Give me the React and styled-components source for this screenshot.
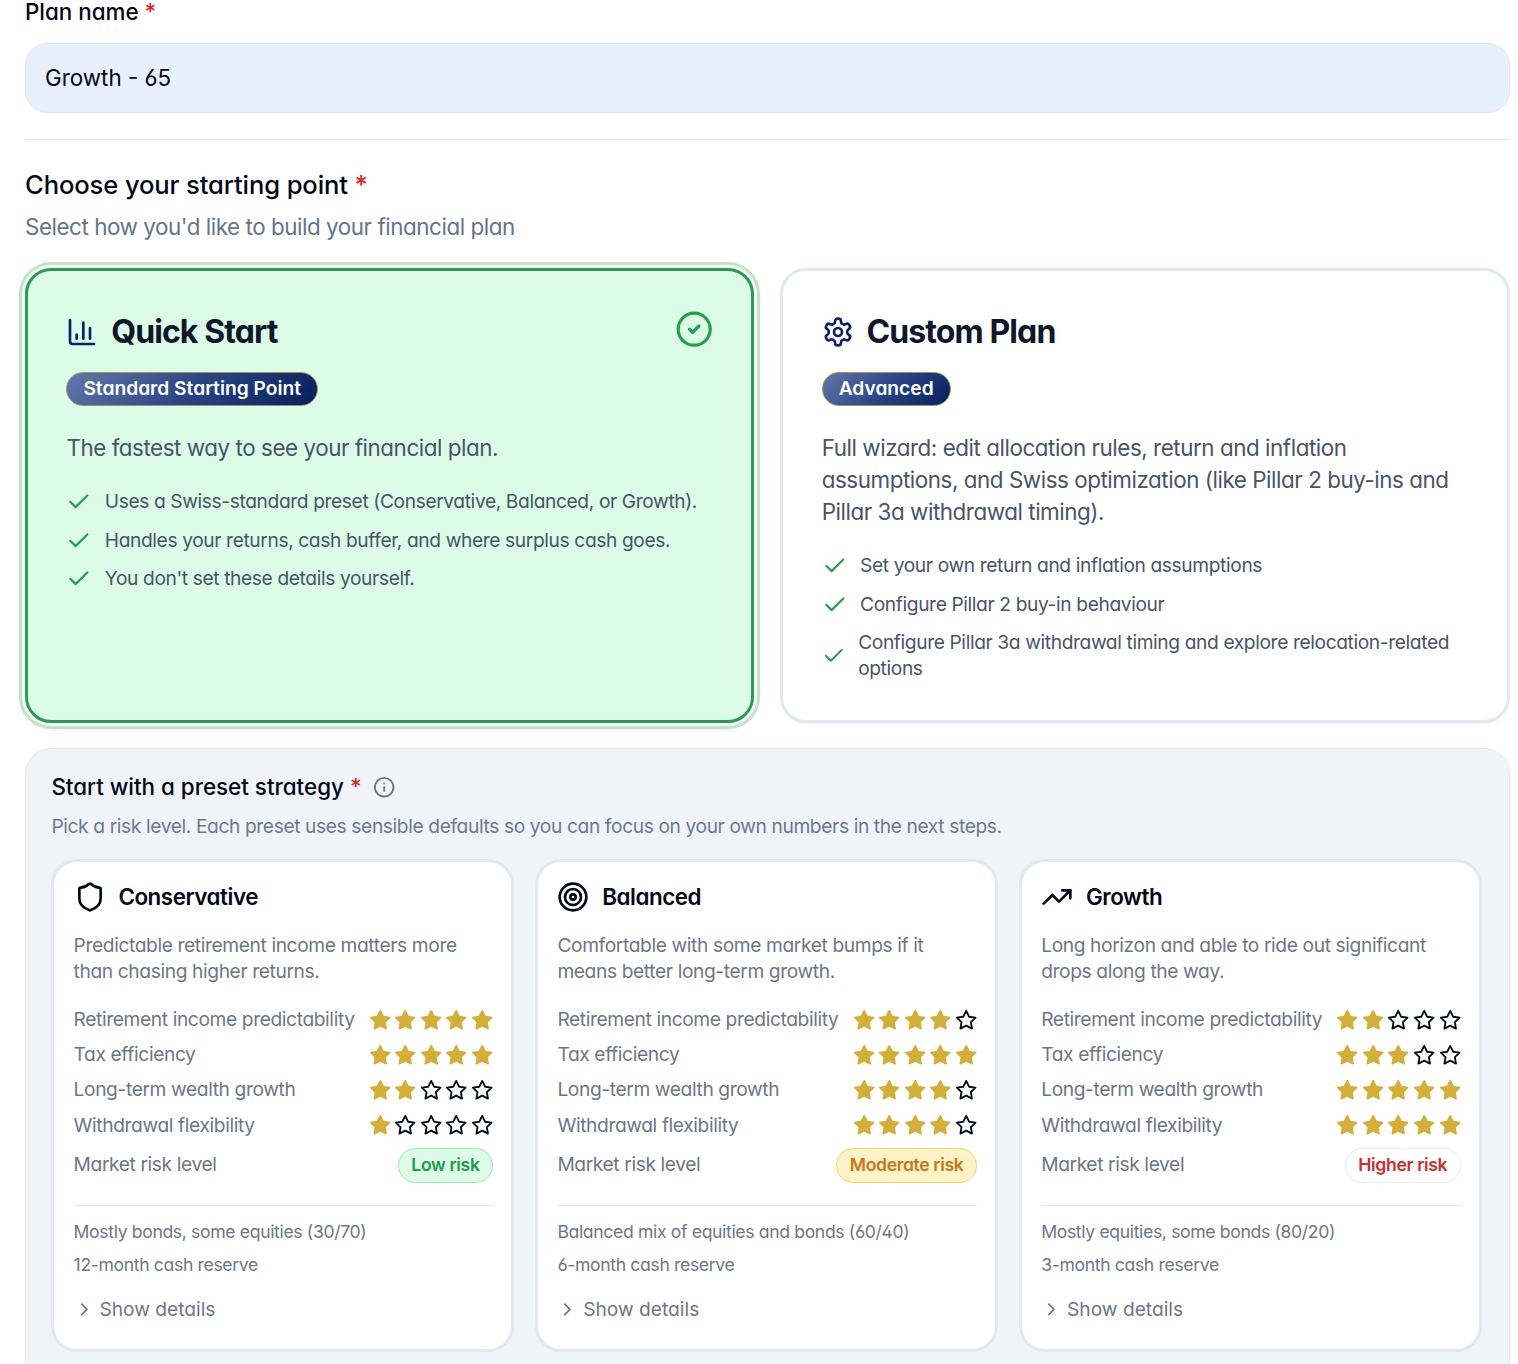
import React from 'react';
import styled, { createGlobalStyle } from 'styled-components';
import {
  ChartColumn,
  Check,
  ChevronRight,
  CircleCheck,
  Info,
  Shield,
  Target,
  TrendingUp,
} from 'lucide-react';

const GlobalStyle = createGlobalStyle`
  * {
    box-sizing: border-box;
  }

  body {
    margin: 0;
    height: 1364px;
    overflow: hidden;
    background: #fff;
    color: #020817;
    font-family: Inter, "Liberation Sans", sans-serif;
    font-feature-settings: "cv02", "cv03", "cv04", "cv11";
    -webkit-font-smoothing: antialiased;
  }

  h2, h3, h4, p, ul {
    margin: 0;
    padding: 0;
  }
`;

const Page = styled.main`
  height: 1364px;
  padding: 0 8.4px 0 25px;
  overflow: hidden;
`;

const Field = styled.div`
  display: flex;
  flex-direction: column;
  gap: 19px;
  padding-bottom: 26px;
  border-bottom: 1px solid #e2e8f0;
`;

const FieldLabel = styled.label`
  height: 24px;
  font-size: 22.4px;
  font-weight: 500;
  line-height: 24px;
`;

const Required = styled.span`
  color: #dc2626;
`;

const TextInput = styled.input`
  width: 100%;
  height: 70px;
  padding: 0 19px 2px;
  border: 1px solid #e2e8f0;
  border-radius: 22px;
  background: #e8f0fe;
  color: #020817;
  font: inherit;
  font-feature-settings: inherit;
  font-size: 22.4px;
  outline: none;
`;

const SectionTitle = styled.h2`
  margin-top: 26px;
  font-size: 25.6px;
  font-weight: 500;
  line-height: 38px;
  letter-spacing: -0.12px;
`;

const SectionHint = styled.p`
  margin-top: 7px;
  color: #64748b;
  font-size: 22.4px;
  line-height: 32px;
  letter-spacing: -0.02em;
`;

const ModeGrid = styled.div`
  display: grid;
  grid-template-columns: 1fr 1fr;
  gap: 26px;
  margin-top: 25px;
`;

const ModeCard = styled.section`
  min-height: 455px;
  padding: 38px 38.4px;
  border: 3px solid ${({ $selected }) => ($selected ? '#2c9a55' : '#e2e8f0')};
  border-radius: 26px;
  background: ${({ $selected }) => ($selected ? '#dcfce7' : '#fff')};
  box-shadow: ${({ $selected }) =>
    $selected
      ? '0 0 0 3px #f2fdf5, 0 0 0 6px #c5e0cd, 0 2px 7px 3px rgba(22, 101, 52, 0.12)'
      : '0 1px 3px rgba(15, 23, 42, 0.05)'};
`;

const ModeHeader = styled.div`
  display: flex;
  align-items: flex-start;
  justify-content: space-between;
`;

const ModeTitle = styled.h3`
  display: flex;
  align-items: center;
  gap: 12.8px;
  padding-top: 3px;
  color: #0f172a;
  font-size: 32px;
  font-weight: 700;
  line-height: 40px;
  letter-spacing: -0.9px;

  svg {
    color: #0b2265;
  }
`;

const SelectedIcon = styled(CircleCheck)`
  margin-top: 1px;
  color: #22a04b;
`;

const Badge = styled.span`
  display: inline-flex;
  align-items: center;
  height: 34px;
  margin-top: 20px;
  padding: 0 16px 3px;
  border: 1px solid #a8924f;
  border-radius: 17px;
  background: linear-gradient(135deg, #6478ab 0%, #2a4587 50%, #051f5c 100%);
  background-origin: border-box;
  color: #fff;
  font-size: 19.2px;
  font-weight: 600;
  line-height: 26px;
`;

const ModeText = styled.p`
  margin-top: 26px;
  color: #475569;
  font-size: 22.4px;
  line-height: 32px;
  letter-spacing: -0.02em;
`;

const FeatureList = styled.ul`
  display: flex;
  flex-direction: column;
  gap: 12.8px;
  margin-top: 25.2px;
  list-style: none;
`;

const Feature = styled.li`
  display: flex;
  align-items: center;
  gap: 12.8px;
  color: #475569;
  font-size: 19.2px;
  line-height: 25.6px;
  letter-spacing: -0.02em;

  svg {
    color: #22a04b;
  }
`;

const PresetPanel = styled.section`
  height: 640px;
  margin-top: 25px;
  padding: 22px 26.6px 0 25.4px;
  border: 1px solid #e2e8f0;
  border-radius: 26px;
  background: #f0f4f9;
`;

const PanelTitle = styled.h3`
  display: flex;
  align-items: center;
  gap: 11px;
  font-size: 22.4px;
  font-weight: 500;
  line-height: 32px;

  svg {
    color: #6b7280;
  }
`;

const PanelHint = styled.p`
  margin-top: 10px;
  color: #6b7a90;
  font-size: 19.2px;
  line-height: 26px;
  letter-spacing: -0.02em;
`;

const PresetGrid = styled.div`
  display: grid;
  grid-template-columns: repeat(3, 1fr);
  gap: 20.8px;
  margin-top: 20.4px;
`;

const PresetCard = styled.article`
  height: 492.4px;
  padding: 18.6px 18px 0 19.2px;
  border: 3px solid #e2e8f0;
  border-radius: 26px;
  background: #fff;
`;

const PresetTitle = styled.h4`
  display: flex;
  align-items: center;
  gap: 12.8px;
  font-size: 22.4px;
  font-weight: 600;
  line-height: 32px;
  letter-spacing: -0.02em;
`;

const PresetText = styled.p`
  height: 52px;
  margin-top: 19px;
  color: #6b7787;
  font-size: 19.2px;
  line-height: 26px;
  letter-spacing: -0.02em;
`;

const Ratings = styled.div`
  display: flex;
  flex-direction: column;
  gap: 9.6px;
  margin-top: 23px;
  padding-bottom: 22px;
  border-bottom: 1px solid #e2e8f0;
`;

const RatingRow = styled.div`
  display: flex;
  align-items: center;
  justify-content: space-between;
  color: #6b7787;
  font-size: 19.2px;
  line-height: 25.6px;
  letter-spacing: -0.02em;
`;

const RiskLabel = styled.span`
  padding-bottom: 1.6px;
`;

const Stars = styled.span`
  display: flex;
  gap: 3.2px;
`;

const StarShape = styled.svg`
  width: 22.4px;
  height: 22.4px;
  color: ${({ $on }) => ($on ? '#d4af37' : '#020817')};
  fill: ${({ $on }) => ($on ? 'currentColor' : 'none')};
  stroke: currentColor;
  stroke-width: 2;
  stroke-linejoin: round;
`;

const riskColors = {
  low: { text: '#219a4c', fill: '#dcfce7', line: '#a0e5b8' },
  moderate: { text: '#c9761a', fill: '#fef3c7', line: '#f0d569' },
  high: { text: '#cf2c30', fill: '#fff', line: '#e8ebf1' },
};

const RiskPill = styled.span`
  height: 35.2px;
  padding: 0 12.8px;
  border: 1px solid ${({ $level }) => riskColors[$level].line};
  border-radius: 18px;
  background: ${({ $level }) => riskColors[$level].fill};
  color: ${({ $level }) => riskColors[$level].text};
  font-size: 17.6px;
  font-weight: 600;
  line-height: 32px;
  letter-spacing: -0.02em;
`;

const Facts = styled.div`
  display: flex;
  flex-direction: column;
  gap: 7px;
  margin-top: 13px;
  color: #6b7787;
  font-size: 17.6px;
  line-height: 26px;
  letter-spacing: -0.02em;
`;

const DetailsToggle = styled.button`
  display: flex;
  align-items: center;
  gap: 5px;
  margin-top: 18px;
  padding: 0;
  border: 0;
  background: none;
  color: #6b7787;
  font: inherit;
  font-feature-settings: inherit;
  font-size: 19.2px;
  line-height: 26px;
`;

// Six-tooth cog with waisted teeth
const Cog = ({ size }) => (
  <svg
    width={size}
    height={size}
    viewBox="0 0 24 24"
    fill="none"
    stroke="currentColor"
    strokeWidth="2"
    strokeLinecap="round"
    strokeLinejoin="round"
  >
    <path d="M12.22 2h-.44a2 2 0 0 0-2 2v.18a2 2 0 0 1-1 1.73l-.43.25a2 2 0 0 1-2 0l-.15-.08a2 2 0 0 0-2.73.73l-.22.38a2 2 0 0 0 .73 2.73l.15.1a2 2 0 0 1 1 1.72v.51a2 2 0 0 1-1 1.74l-.15.09a2 2 0 0 0-.73 2.73l.22.38a2 2 0 0 0 2.73.73l.15-.08a2 2 0 0 1 2 0l.43.25a2 2 0 0 1 1 1.73V20a2 2 0 0 0 2 2h.44a2 2 0 0 0 2-2v-.18a2 2 0 0 1 1-1.73l.43-.25a2 2 0 0 1 2 0l.15.08a2 2 0 0 0 2.73-.73l.22-.39a2 2 0 0 0-.73-2.73l-.15-.08a2 2 0 0 1-1-1.74v-.5a2 2 0 0 1 1-1.74l.15-.09a2 2 0 0 0 .73-2.73l-.22-.38a2 2 0 0 0-2.73-.73l-.15.08a2 2 0 0 1-2 0l-.43-.25a2 2 0 0 1-1-1.73V4a2 2 0 0 0-2-2z" />
    <circle cx="12" cy="12" r="3" />
  </svg>
);

const RatingStar = ({ on }) => (
  <StarShape viewBox="0 0 24 24" $on={on}>
    <polygon points="12 2 15.09 8.26 22 9.27 17 14.14 18.18 21.02 12 17.77 5.82 21.02 7 14.14 2 9.27 8.91 8.26 12 2" />
  </StarShape>
);

const modes = [
  {
    title: 'Quick Start',
    icon: ChartColumn,
    badge: 'Standard Starting Point',
    text: 'The fastest way to see your financial plan.',
    features: [
      'Uses a Swiss-standard preset (Conservative, Balanced, or Growth).',
      'Handles your returns, cash buffer, and where surplus cash goes.',
      "You don't set these details yourself.",
    ],
    selected: true,
  },
  {
    title: 'Custom Plan',
    icon: Cog,
    badge: 'Advanced',
    text: 'Full wizard: edit allocation rules, return and inflation assumptions, and Swiss optimization (like Pillar 2 buy-ins and Pillar 3a withdrawal timing).',
    features: [
      'Set your own return and inflation assumptions',
      'Configure Pillar 2 buy-in behaviour',
      'Configure Pillar 3a withdrawal timing and explore relocation-related options',
    ],
    selected: false,
  },
];

const criteria = [
  'Retirement income predictability',
  'Tax efficiency',
  'Long-term wealth growth',
  'Withdrawal flexibility',
];

const presets = [
  {
    title: 'Conservative',
    icon: Shield,
    text: 'Predictable retirement income matters more than chasing higher returns.',
    scores: [5, 5, 2, 1],
    level: 'low',
    risk: 'Low risk',
    facts: ['Mostly bonds, some equities (30/70)', '12-month cash reserve'],
  },
  {
    title: 'Balanced',
    icon: Target,
    text: 'Comfortable with some market bumps if it means better long-term growth.',
    scores: [4, 5, 4, 4],
    level: 'moderate',
    risk: 'Moderate risk',
    facts: ['Balanced mix of equities and bonds (60/40)', '6-month cash reserve'],
  },
  {
    title: 'Growth',
    icon: TrendingUp,
    text: 'Long horizon and able to ride out significant drops along the way.',
    scores: [2, 3, 5, 5],
    level: 'high',
    risk: 'Higher risk',
    facts: ['Mostly equities, some bonds (80/20)', '3-month cash reserve'],
  },
];

const Mode = ({ mode }) => {
  const Icon = mode.icon;
  return (
    <ModeCard $selected={mode.selected}>
      <ModeHeader>
        <ModeTitle>
          <Icon size={32} />
          {mode.title}
        </ModeTitle>
        {mode.selected && <SelectedIcon size={38.4} />}
      </ModeHeader>
      <Badge>{mode.badge}</Badge>
      <ModeText>{mode.text}</ModeText>
      <FeatureList>
        {mode.features.map((feature) => (
          <Feature key={feature}>
            <Check size={25.6} />
            <span>{feature}</span>
          </Feature>
        ))}
      </FeatureList>
    </ModeCard>
  );
};

const Preset = ({ preset }) => {
  const Icon = preset.icon;
  return (
    <PresetCard>
      <PresetTitle>
        <Icon size={32} />
        {preset.title}
      </PresetTitle>
      <PresetText>{preset.text}</PresetText>
      <Ratings>
        {criteria.map((name, row) => (
          <RatingRow key={name}>
            {name}
            <Stars>
              {[1, 2, 3, 4, 5].map((n) => (
                <RatingStar key={n} on={n <= preset.scores[row]} />
              ))}
            </Stars>
          </RatingRow>
        ))}
        <RatingRow>
          <RiskLabel>Market risk level</RiskLabel>
          <RiskPill $level={preset.level}>{preset.risk}</RiskPill>
        </RatingRow>
      </Ratings>
      <Facts>
        {preset.facts.map((fact) => (
          <p key={fact}>{fact}</p>
        ))}
      </Facts>
      <DetailsToggle type="button">
        <ChevronRight size={20.8} />
        Show details
      </DetailsToggle>
    </PresetCard>
  );
};

const App = () => (
  <>
    <GlobalStyle />
    <Page>
      <Field>
        <FieldLabel htmlFor="plan-name">
          Plan name <Required>*</Required>
        </FieldLabel>
        <TextInput id="plan-name" defaultValue="Growth - 65" />
      </Field>
      <SectionTitle>
        Choose your starting point <Required>*</Required>
      </SectionTitle>
      <SectionHint>Select how you'd like to build your financial plan</SectionHint>
      <ModeGrid>
        {modes.map((mode) => (
          <Mode key={mode.title} mode={mode} />
        ))}
      </ModeGrid>
      <PresetPanel>
        <PanelTitle>
          <span>
            Start with a preset strategy <Required>*</Required>
          </span>
          <Info size={22.4} />
        </PanelTitle>
        <PanelHint>
          Pick a risk level. Each preset uses sensible defaults so you can focus on your own numbers in the next steps.
        </PanelHint>
        <PresetGrid>
          {presets.map((preset) => (
            <Preset key={preset.title} preset={preset} />
          ))}
        </PresetGrid>
      </PresetPanel>
    </Page>
  </>
);

export default App;
